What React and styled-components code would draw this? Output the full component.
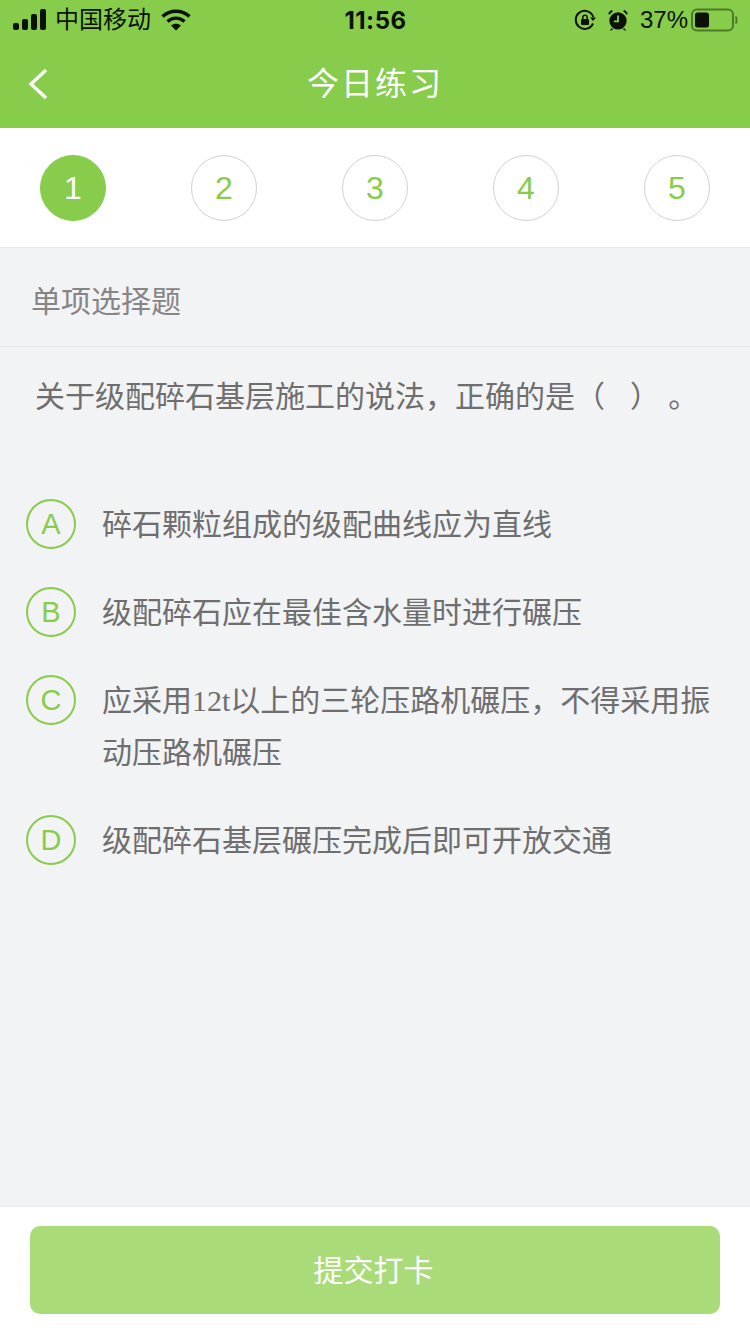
import React from "react";
import styled, { createGlobalStyle } from "styled-components";

const Global = createGlobalStyle`
  html, body { margin: 0; padding: 0; background: #f2f3f5; }
  * { box-sizing: border-box; }
`;
const CJK = `"Liberation Sans", "Noto Sans CJK SC", sans-serif`;

const Page = styled.div`
  width: 750px; height: 1334px; display: flex; flex-direction: column;
  background: #f2f3f5; font-family: ${CJK}; overflow: hidden;
`;
const Header = styled.header`background: #87cc4b; height: 128px; display: flex; flex-direction: column;`;
const StatusBar = styled.div`
  height: 40px; display: grid; grid-template-columns: 1fr auto 1fr; align-items: center;
  padding: 0 12px 0 13px; color: #0b1205;
`;
const StatusLeft = styled.div`display: flex; align-items: center; gap: 7px; font-size: 24px;`;
const Carrier = styled.span`margin-right: 3px; line-height: 40px;`;
const StatusRight = styled.div`display: flex; align-items: center; justify-content: flex-end; font-size: 24px; gap: 12px;`;
const Percent = styled.span`margin-left: 0;`;
const Clock = styled.div`font-size: 24px; font-weight: 700; font-family: "Inter", sans-serif; letter-spacing: 0.5px;`;
const NavBar = styled.div`position: relative; flex: 1; display: flex; align-items: center; justify-content: center;`;
const BackIcon = styled.svg`position: absolute; left: 27px; top: 28px;`;
const Title = styled.h1`margin: 0; color: #fff; font-size: 32px; font-weight: 400; letter-spacing: 2px; line-height: 88px;`;
const Steps = styled.nav`
  background: #fff; height: 120px; display: flex; justify-content: space-between; align-items: flex-start;
  padding: 27px 40px 0; border-bottom: 1px solid #e8e9ea;
`;
const Step = styled.div`
  width: 66px; height: 66px; border-radius: 50%; display: flex; align-items: center; justify-content: center;
  font-size: 32px; border: 1px solid ${p => p.$active ? "#87cc4b" : "#d2d2d2"};
  background: ${p => p.$active ? "#87cc4b" : "#fff"}; color: ${p => p.$active ? "#fff" : "#87cc4b"};
`;
const SectionLabel = styled.div`
  height: 99px; padding: 32px 31px 0; font-size: 30px; line-height: 44px; color: #858585;
  border-bottom: 1px solid #e6e7e9;
`;
const Question = styled.p`
  margin: 0; padding: 24px 30px 0 35px; height: 152px; font-size: 30px; line-height: 52px; color: #6e6e6e;
`;
const Options = styled.div`display: flex; flex-direction: column; gap: 36px; padding: 0 30px 0 26px;`;
const Option = styled.div`display: flex; gap: 26px; align-items: flex-start;`;
const Badge = styled.div`
  flex: none; width: 50px; height: 50px; border-radius: 50%; border: 2px solid #87cc4b; color: #87cc4b;
  display: flex; align-items: center; justify-content: center; font-size: 29px;
`;
const OptionText = styled.div`
  font-size: 30px; line-height: 52px; color: #6e6e6e;
  font-family: "Liberation Serif", "Noto Sans CJK SC", serif;
`;
const Footer = styled.footer`
  margin-top: auto; height: 128px; background: #fff; border-top: 1px solid #e8e9ea; padding: 19px 30px 0;
`;
const Submit = styled.button`
  width: 100%; height: 88px; border: 0; border-radius: 10px; background: #a9dc78; color: #fff;
  font-size: 30px; font-family: ${CJK}; padding: 0 3px 4px 0;
`;

const Signal = () => (
  <svg width="35" height="22" viewBox="0 0 35 22" fill="currentColor">
    <rect x="0" y="14" width="6" height="7" rx="2" /><rect x="9" y="10" width="6" height="11" rx="2" />
    <rect x="18" y="5" width="6" height="16" rx="2" /><rect x="27" y="0" width="6" height="21" rx="2" />
  </svg>
);
const Wifi = () => (
  <svg width="30" height="22" viewBox="0 0 30 22" fill="none" stroke="currentColor" strokeWidth="3.4">
    <path d="M1.5 7.5C9 .5 21 .5 28.5 7.5" /><path d="M6.5 12.5C11.5 8 18.5 8 23.5 12.5" />
    <path d="M15 21.5 10 16.6c3-2.4 7-2.4 10 0Z" fill="currentColor" stroke="none" />
  </svg>
);
const RotationLock = () => (
  <svg width="22" height="22" viewBox="0 0 22 22" fill="none" stroke="currentColor" strokeWidth="2">
    <path d="M19 14.5A9 9 0 1 1 19.3 8" /><path d="M16 8.5h6l-3 3.5Z" fill="currentColor" stroke="none" />
    <rect x="7" y="10" width="8" height="6" rx="1" fill="currentColor" stroke="none" />
    <path d="M8.8 10V8.4a2.2 2.2 0 0 1 4.4 0V10" strokeWidth="1.5" />
  </svg>
);
const Alarm = () => (
  <svg width="20" height="22" viewBox="0 0 22 24" fill="currentColor">
    <circle cx="11" cy="13" r="9.5" /><path d="M1 6.5 5.5 2 3.5 1 .5 4ZM21 6.5 16.5 2l2-1 3 3ZM4 21l-2 2.5h1.5L6 22ZM18 21l2 2.5h-1.5L16 22Z" />
    <path d="M11 7v6.5H6.5" fill="none" stroke="#87cc4b" strokeWidth="2" />
  </svg>
);
const Battery = () => (
  <svg width="47" height="24" viewBox="0 0 47 24" style={{ marginLeft: -9 }}>
    <rect x="1" y="1.5" width="41" height="21" rx="5" fill="none" stroke="#4d7a2a" strokeWidth="2" />
    <rect x="4" y="4.5" width="14" height="15" rx="2.5" fill="#0b1205" />
    <path d="M44.5 8.5c1.5 1 1.5 6 0 7" fill="none" stroke="#4d7a2a" strokeWidth="2" />
  </svg>
);

const options = [
  ["A", "碎石颗粒组成的级配曲线应为直线"],
  ["B", "级配碎石应在最佳含水量时进行碾压"],
  ["C", "应采用12t以上的三轮压路机碾压，不得采用振动压路机碾压"],
  ["D", "级配碎石基层碾压完成后即可开放交通"],
];

export default function App() {
  return (
    <Page>
      <Global />
      <Header>
        <StatusBar>
          <StatusLeft><Signal /><Carrier>中国移动</Carrier><Wifi /></StatusLeft>
          <Clock>11:56</Clock>
          <StatusRight><RotationLock /><Alarm /><Percent>37%</Percent><Battery /></StatusRight>
        </StatusBar>
        <NavBar>
          <BackIcon width="22" height="32" viewBox="0 0 22 32" fill="none" stroke="#fff" strokeWidth="3.4">
            <path d="M19 2 4 16l15 14" />
          </BackIcon>
          <Title>今日练习</Title>
        </NavBar>
      </Header>
      <Steps>
        {[1, 2, 3, 4, 5].map(n => <Step key={n} $active={n === 1}>{n}</Step>)}
      </Steps>
      <SectionLabel>单项选择题</SectionLabel>
      <Question>关于级配碎石基层施工的说法，正确的是（{"\u00a0\u00a0\u00a0"}）{"\u00a0"}。</Question>
      <Options>
        {options.map(([k, t]) => (
          <Option key={k}><Badge>{k}</Badge><OptionText>{t}</OptionText></Option>
        ))}
      </Options>
      <Footer><Submit>提交打卡</Submit></Footer>
    </Page>
  );
}
